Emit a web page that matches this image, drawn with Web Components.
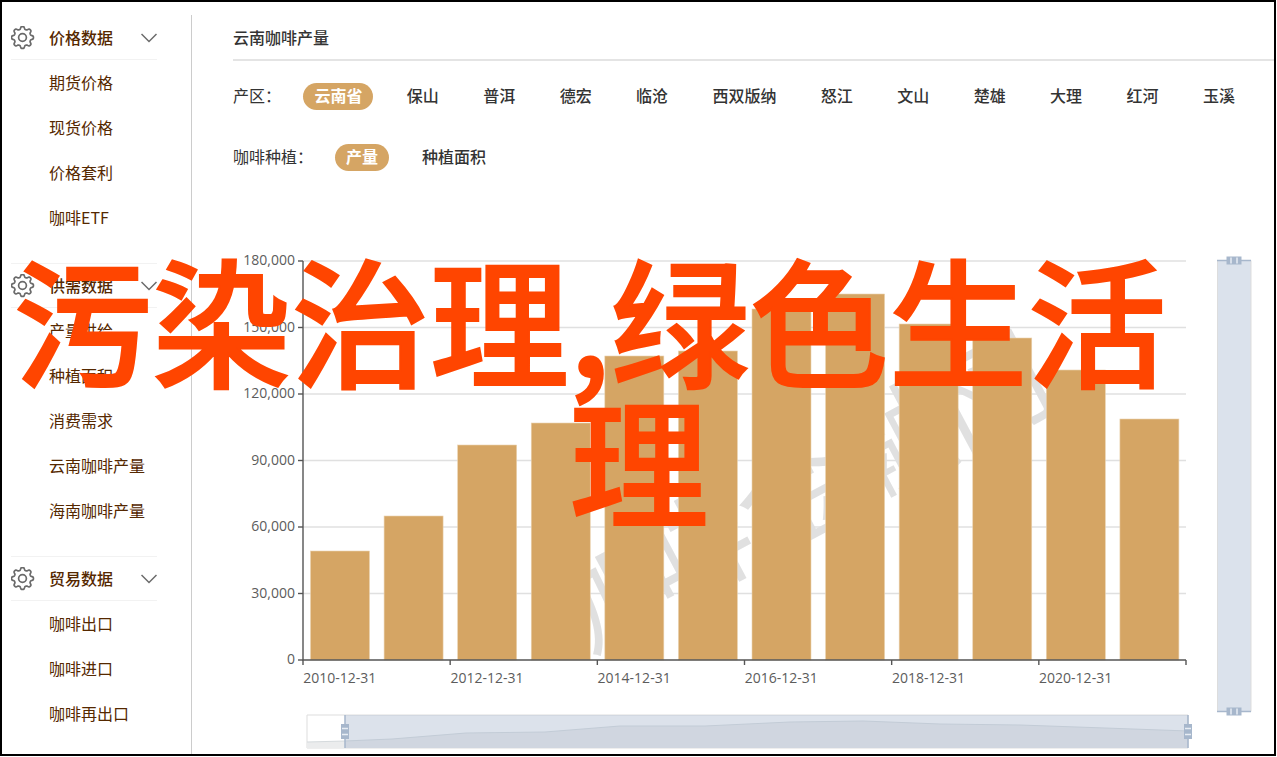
<!DOCTYPE html>
<html lang="zh-CN">
<head>
<meta charset="utf-8">
<meta name="viewport" content="width=device-width, initial-scale=1">
<title>云南咖啡产量</title>
<style>
body { margin: 0; background: #fff; font: 16px/24px "Noto Sans CJK SC", sans-serif; color: #333; }
</style>
</head>
<body>
<coffee-app>
  <nav-panel slot="nav"></nav-panel>
  <h1 slot="title">云南咖啡产量</h1>
  <filter-row spread label="产区：" options="云南省 保山 普洱 德宏 临沧 西双版纳 怒江 文山 楚雄 大理 红河 玉溪"></filter-row>
  <filter-row label="咖啡种植：" options="产量 种植面积"></filter-row>
  <yield-chart></yield-chart>
  <banner-text slot="banner"><span>污染治理,绿色生活</span><span>理</span></banner-text>
</coffee-app>
<script>
const mount = (el, html) => { el.attachShadow({ mode: 'open' }).innerHTML = html; };

customElements.define('coffee-app', class extends HTMLElement {
  constructor() {
    super();
    mount(this, `<style>
      :host { display: flex; box-sizing: border-box; position: relative; min-height: calc(100vh - 1px);
        margin: 0 1px 1px 0; border: 2px solid #000; padding-top: 13px; overflow: hidden; }
      main { flex: 1; min-width: 0; padding-left: 41px; display: flex; flex-direction: column; }
      header { border-bottom: 2px solid #e4e4e4; padding: 10px 0; margin-bottom: 22px; }
      ::slotted(h1) { margin: 0; font-size: 16px; line-height: 24px; font-weight: 500; }
    </style>
    <slot name="nav"></slot>
    <main><header><slot name="title"></slot></header><slot></slot></main>
    <slot name="banner"></slot>`);
  }
});

customElements.define('nav-panel', class extends HTMLElement {
  constructor() {
    super();
    const groups = [
      ['价格数据', ['期货价格', '现货价格', '价格套利', '咖啡ETF']],
      ['供需数据', ['产量供给', '种植面积', '消费需求', '云南咖啡产量', '海南咖啡产量']],
      ['贸易数据', ['咖啡出口', '咖啡进口', '咖啡再出口']]
    ];
    mount(this, `<style>
      :host { display: block; flex: none; width: 189px; border-right: 1px solid #ccc; }
    </style>` + groups.map(([t, items]) => `<nav-group heading="${t}" items="${items.join(' ')}"></nav-group>`).join(''));
  }
});

customElements.define('nav-group', class extends HTMLElement {
  connectedCallback() {
    if (this.shadowRoot) return;
    const gear = [];
    for (let i = 0; i < 96; i++) {
      const a = i / 96 * 2 * Math.PI;
      const r = 9.7 + 1.3 * Math.tanh(2 * Math.cos(8 * a));
      gear.push((11.5 + r * Math.sin(a)).toFixed(2) + ' ' + (11.5 - r * Math.cos(a)).toFixed(2));
    }
    mount(this, `<style>
      :host { display: block; padding-bottom: 23px; margin: 0 34px 0 9px; color: #552800; }
      :host(:last-of-type) { padding-bottom: 0; }
      button { all: unset; box-sizing: border-box; display: flex; align-items: center; width: 100%; height: 45px;
        border: solid #f2f2f2; border-width: 1px 0; font-weight: 500; cursor: pointer; }
      :host(:first-of-type) button { border-top-color: transparent; }
      b { flex: 1; margin-left: 14px; padding-bottom: 2px; font-weight: 500; }
      svg { display: block; fill: none; stroke: #6a6a6a; }
      ul { margin: 0; padding: 0; list-style: none; }
      a { display: block; height: 45px; line-height: 45px; padding-left: 38px; color: inherit; text-decoration: none; white-space: nowrap; }
    </style>
    <button type="button" aria-expanded="true">
      <svg width="24" height="24" stroke-width="1.7" stroke-linejoin="round" aria-hidden="true"><path d="M${gear.join('L')}Z"/><circle cx="11.5" cy="11.5" r="3.9"/></svg>
      <b>${this.getAttribute('heading')}</b>
      <svg width="16" height="10" stroke-width="1.5" aria-hidden="true"><path d="M.5 1 8 8.500 15.500 1"/></svg>
    </button>
    <ul>${this.getAttribute('items').split(' ').map(t => `<li><a href="#">${t}</a></li>`).join('')}</ul>`);
  }
});

customElements.define('filter-row', class extends HTMLElement {
  connectedCallback() {
    if (this.shadowRoot) return;
    mount(this, `<style>
      :host { display: block; margin: 0 28px 34px 0; }
      div { display: flex; align-items: center; gap: 22px; }
      :host([spread]) div { justify-content: space-between; }
      span { white-space: nowrap; line-height: 25px; padding-bottom: 2px; }
      button { flex: none; border: 0; margin: 0; padding: 0 11px 2px; height: 27px; border-radius: 14px; background: none;
        font: 500 16px/25px "Noto Sans CJK SC", sans-serif; color: #333; cursor: pointer; }
      button[aria-pressed=true] { background: #d5a564; color: #fff; font-weight: 700; }
    </style><div role="group" aria-labelledby="l"><span id="l">${this.getAttribute('label')}</span>` +
    this.getAttribute('options').split(' ').map((t, i) => `<button type="button" aria-pressed="${i === 0}">${t}</button>`).join('') + '</div>');
  }
});

customElements.define('yield-chart', class extends HTMLElement {
  constructor() {
    super();
    const left = 303, right = 1186, base = 660, unit = 66.5, step = (right - left) / 12;
    const tops = [551, 516, 445, 423, 356, 351, 309, 294, 324, 338, 370, 419];
    let grid = '', axis = '', bars = '';
    for (let i = 0; i <= 6; i++) {
      const y = base - i * unit;
      if (i) grid += `<path d="M${left} ${y}H${right}"/>`;
      axis += `<path d="M${left - 5} ${y}H${left}"/>`;
    }
    const yText = [0, 1, 2, 3, 4, 5, 6].map(i => `<text x="295" y="${base - i * unit + 4}" text-anchor="end">${(i * 30000).toLocaleString('en-US')}</text>`).join('');
    let xText = '';
    for (let i = 0; i <= 12; i += 2) {
      const x = left + i * step;
      axis += `<path d="M${x} ${base}v5"/>`;
      if (i < 12) xText += `<text x="${x + step / 2}" y="683" text-anchor="middle">${2010 + i}-12-31</text>`;
    }
    tops.forEach((t, i) => { bars += `<rect x="${left + i * step + 7.5}" y="${t}" width="59" height="${base - t}"/>`; });
    const line = '307 742 345 741 392 739 466 733 545 732 620 726 705 726 790 722 863 721 940 724 1020 725 1105 728 1188 731';
    const grip = (x, y, turn) => `<g transform="translate(${x} ${y}) rotate(${turn})"><rect x="-4" y="-7.500" width="8" height="15" fill="#a7b7cc"/><path d="M-3 -3H3M-3 3H3" stroke="#e8edf4" stroke-width="1.500"/></g>`;
    mount(this, `<style>
      :host { display: block; margin-top: -4px; }
      svg { display: block; width: 100%; height: auto; }
      text { font: 14px "Open Sans", "Noto Sans", sans-serif; fill: #5c5c5c; }
      .mark { font: 400 112px "Noto Sans CJK SC", sans-serif; fill: #e0e0e0; }
    </style>
    <svg viewBox="233 201 1041 553" role="img" aria-label="云南咖啡产量 2010–2021">
      <text class="mark" transform="translate(566 664) rotate(-28)">咖啡金融网</text>
      <g stroke="#e0e0e0" stroke-width="1.500">${grid}</g>
      <g fill="#d5a564" stroke="#ead2b0" stroke-width=".6">${bars}</g>
      <g fill="none" stroke="#555" stroke-width="1.400">${axis}<path d="M303 261V660H1186"/></g>
      ${yText}${xText}
      <path d="M307 715H1188V748H307Z" fill="#fff" stroke="#ddd"/>
      <path d="M307 748L${line} 1188 748Z" fill="#ebeced"/>
      <polyline points="${line}" fill="none" stroke="#d5dadd"/>
      <path d="M345 715H1188V748H345Z" fill="#a7b7cc" fill-opacity=".4"/>
      <path d="M345 715V748M1188 715V748" stroke="#a7b7cc" stroke-width="1.500"/>
      ${grip(345, 731.5, 0)}${grip(1188, 731.5, 0)}
      <path d="M1217.500 260.500H1251V711.500H1217.500Z" fill="#dbe2ec" stroke="#ddd"/>
      <path d="M1217 260.500H1251M1217 711.500H1251" stroke="#a7b7cc" stroke-width="1.500"/>
      ${grip(1234, 260.5, 90)}${grip(1234, 711.5, 90)}
    </svg>`);
  }
});

customElements.define('banner-text', class extends HTMLElement {
  constructor() {
    super();
    mount(this, `<style>
      :host { position: absolute; inset: 245px 9px auto 11px; display: flex; flex-direction: column; align-items: center;
        font: 500 139px/140px "Noto Sans CJK SC", sans-serif; color: #ff4500; -webkit-text-stroke: 2px #ff4500;
        white-space: nowrap; pointer-events: none; }
      ::slotted(span:first-child) { align-self: flex-start; }
    </style><slot></slot>`);
  }
});
</script>
</body>
</html>
